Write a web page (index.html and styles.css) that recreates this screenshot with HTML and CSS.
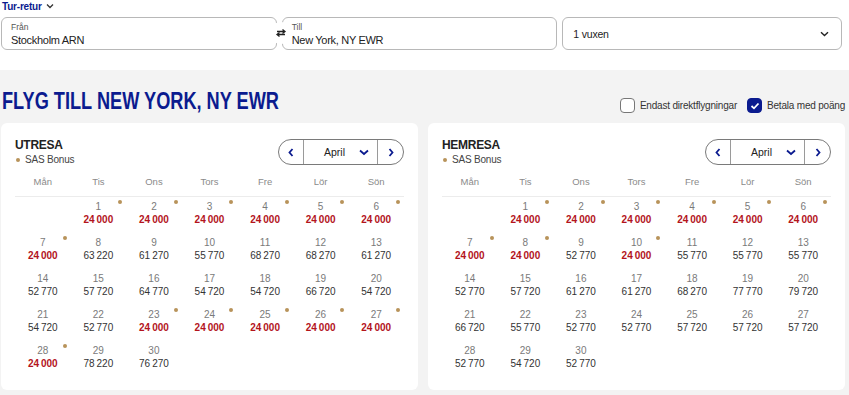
FILE: index.html
```html
<!DOCTYPE html>
<html lang="sv">
<head>
    <meta charset="UTF-8">
    <meta name="viewport" content="width=device-width, initial-scale=1.0">
    <title>Flyg till New York</title>
    <link rel="stylesheet" href="styles.css">
</head>
<body>
    <header class="search">
        <div class="trip-type">
            Tur-retur
            <svg width="8" height="6" viewBox="0 0 8 6"><polyline points="1,1.5 4,4.5 7,1.5" fill="none" stroke="#333" stroke-width="1.3"/></svg>
        </div>
        <div class="search-row">
            <div class="field">
                <span class="field-label">Från</span>
                <span class="field-value">Stockholm ARN</span>
            </div>
            <div class="swap">
                <svg width="12" height="10" viewBox="0 0 12 10">
                    <path d="M2 3.5h8M7.5 1.5l2.5 2-2.5 2" fill="none" stroke="#222" stroke-width="1.3"/>
                    <path d="M10 6.5H2M4.5 4.5L2 6.5l2.5 2" fill="none" stroke="#222" stroke-width="1.3"/>
                </svg>
            </div>
            <div class="field">
                <span class="field-label">Till</span>
                <span class="field-value">New York, NY EWR</span>
            </div>
            <div class="field field-pax">
                <span>1 vuxen</span>
                <svg width="9" height="6" viewBox="0 0 9 6"><polyline points="1,1.2 4.5,4.5 8,1.2" fill="none" stroke="#222" stroke-width="1.4"/></svg>
            </div>
        </div>
    </header>

    <main class="results">
        <div class="results-head">
            <h1>FLYG TILL NEW YORK, NY EWR</h1>
            <div class="filters">
                <label class="check"><span class="box"></span>Endast direktflygningar</label>
                <label class="check"><span class="box checked"><svg width="10" height="8" viewBox="0 0 10 8"><polyline points="1.5,4 4,6.3 8.5,1.5" fill="none" stroke="#fff" stroke-width="1.8"/></svg></span>Betala med poäng</label>
            </div>
        </div>

        <div class="calendars">
            <section class="cal">
                <div class="cal-head">
                    <div>
                        <h2>UTRESA</h2>
                        <div class="legend"><span class="dot"></span>SAS Bonus</div>
                    </div>
                    <div class="month-nav">
                        <span class="nav-btn"><svg width="6" height="9" viewBox="0 0 6 9"><polyline points="4.5,1 1.5,4.5 4.5,8" fill="none" stroke="#0b1b8f" stroke-width="1.8"/></svg></span>
                        <span class="nav-month">April <svg width="10" height="7" viewBox="0 0 10 7"><polyline points="1,1.5 5,5 9,1.5" fill="none" stroke="#0b1b8f" stroke-width="1.8"/></svg></span>
                        <span class="nav-btn"><svg width="6" height="9" viewBox="0 0 6 9"><polyline points="1.5,1 4.5,4.5 1.5,8" fill="none" stroke="#0b1b8f" stroke-width="1.8"/></svg></span>
                    </div>
                </div>
                <div class="weekdays">
                    <span>Mån</span><span>Tis</span><span>Ons</span><span>Tors</span><span>Fre</span><span>Lör</span><span>Sön</span>
                </div>
                <div class="days">
                    <div class="day"></div>
                    <div class="day bonus"><span class="num">1</span><span class="price">24&#8239;000</span></div>
                    <div class="day bonus"><span class="num">2</span><span class="price">24&#8239;000</span></div>
                    <div class="day bonus"><span class="num">3</span><span class="price">24&#8239;000</span></div>
                    <div class="day bonus"><span class="num">4</span><span class="price">24&#8239;000</span></div>
                    <div class="day bonus"><span class="num">5</span><span class="price">24&#8239;000</span></div>
                    <div class="day bonus"><span class="num">6</span><span class="price">24&#8239;000</span></div>

                    <div class="day bonus"><span class="num">7</span><span class="price">24&#8239;000</span></div>
                    <div class="day"><span class="num">8</span><span class="price">63&#8239;220</span></div>
                    <div class="day"><span class="num">9</span><span class="price">61&#8239;270</span></div>
                    <div class="day"><span class="num">10</span><span class="price">55&#8239;770</span></div>
                    <div class="day"><span class="num">11</span><span class="price">68&#8239;270</span></div>
                    <div class="day"><span class="num">12</span><span class="price">68&#8239;270</span></div>
                    <div class="day"><span class="num">13</span><span class="price">61&#8239;270</span></div>

                    <div class="day"><span class="num">14</span><span class="price">52&#8239;770</span></div>
                    <div class="day"><span class="num">15</span><span class="price">57&#8239;720</span></div>
                    <div class="day"><span class="num">16</span><span class="price">64&#8239;770</span></div>
                    <div class="day"><span class="num">17</span><span class="price">54&#8239;720</span></div>
                    <div class="day"><span class="num">18</span><span class="price">54&#8239;720</span></div>
                    <div class="day"><span class="num">19</span><span class="price">66&#8239;720</span></div>
                    <div class="day"><span class="num">20</span><span class="price">54&#8239;720</span></div>

                    <div class="day"><span class="num">21</span><span class="price">54&#8239;720</span></div>
                    <div class="day"><span class="num">22</span><span class="price">52&#8239;770</span></div>
                    <div class="day bonus"><span class="num">23</span><span class="price">24&#8239;000</span></div>
                    <div class="day bonus"><span class="num">24</span><span class="price">24&#8239;000</span></div>
                    <div class="day bonus"><span class="num">25</span><span class="price">24&#8239;000</span></div>
                    <div class="day bonus"><span class="num">26</span><span class="price">24&#8239;000</span></div>
                    <div class="day bonus"><span class="num">27</span><span class="price">24&#8239;000</span></div>

                    <div class="day bonus"><span class="num">28</span><span class="price">24&#8239;000</span></div>
                    <div class="day"><span class="num">29</span><span class="price">78&#8239;220</span></div>
                    <div class="day"><span class="num">30</span><span class="price">76&#8239;270</span></div>
                </div>
            </section>

            <section class="cal">
                <div class="cal-head">
                    <div>
                        <h2>HEMRESA</h2>
                        <div class="legend"><span class="dot"></span>SAS Bonus</div>
                    </div>
                    <div class="month-nav">
                        <span class="nav-btn"><svg width="6" height="9" viewBox="0 0 6 9"><polyline points="4.5,1 1.5,4.5 4.5,8" fill="none" stroke="#0b1b8f" stroke-width="1.8"/></svg></span>
                        <span class="nav-month">April <svg width="10" height="7" viewBox="0 0 10 7"><polyline points="1,1.5 5,5 9,1.5" fill="none" stroke="#0b1b8f" stroke-width="1.8"/></svg></span>
                        <span class="nav-btn"><svg width="6" height="9" viewBox="0 0 6 9"><polyline points="1.5,1 4.5,4.5 1.5,8" fill="none" stroke="#0b1b8f" stroke-width="1.8"/></svg></span>
                    </div>
                </div>
                <div class="weekdays">
                    <span>Mån</span><span>Tis</span><span>Ons</span><span>Tors</span><span>Fre</span><span>Lör</span><span>Sön</span>
                </div>
                <div class="days">
                    <div class="day"></div>
                    <div class="day bonus"><span class="num">1</span><span class="price">24&#8239;000</span></div>
                    <div class="day bonus"><span class="num">2</span><span class="price">24&#8239;000</span></div>
                    <div class="day bonus"><span class="num">3</span><span class="price">24&#8239;000</span></div>
                    <div class="day bonus"><span class="num">4</span><span class="price">24&#8239;000</span></div>
                    <div class="day bonus"><span class="num">5</span><span class="price">24&#8239;000</span></div>
                    <div class="day bonus"><span class="num">6</span><span class="price">24&#8239;000</span></div>

                    <div class="day bonus"><span class="num">7</span><span class="price">24&#8239;000</span></div>
                    <div class="day bonus"><span class="num">8</span><span class="price">24&#8239;000</span></div>
                    <div class="day"><span class="num">9</span><span class="price">52&#8239;770</span></div>
                    <div class="day bonus"><span class="num">10</span><span class="price">24&#8239;000</span></div>
                    <div class="day"><span class="num">11</span><span class="price">55&#8239;770</span></div>
                    <div class="day"><span class="num">12</span><span class="price">55&#8239;770</span></div>
                    <div class="day"><span class="num">13</span><span class="price">55&#8239;770</span></div>

                    <div class="day"><span class="num">14</span><span class="price">52&#8239;770</span></div>
                    <div class="day"><span class="num">15</span><span class="price">57&#8239;720</span></div>
                    <div class="day"><span class="num">16</span><span class="price">61&#8239;270</span></div>
                    <div class="day"><span class="num">17</span><span class="price">61&#8239;270</span></div>
                    <div class="day"><span class="num">18</span><span class="price">68&#8239;270</span></div>
                    <div class="day"><span class="num">19</span><span class="price">77&#8239;770</span></div>
                    <div class="day"><span class="num">20</span><span class="price">79&#8239;720</span></div>

                    <div class="day"><span class="num">21</span><span class="price">66&#8239;720</span></div>
                    <div class="day"><span class="num">22</span><span class="price">55&#8239;770</span></div>
                    <div class="day"><span class="num">23</span><span class="price">52&#8239;770</span></div>
                    <div class="day"><span class="num">24</span><span class="price">52&#8239;770</span></div>
                    <div class="day"><span class="num">25</span><span class="price">57&#8239;720</span></div>
                    <div class="day"><span class="num">26</span><span class="price">57&#8239;720</span></div>
                    <div class="day"><span class="num">27</span><span class="price">57&#8239;720</span></div>

                    <div class="day"><span class="num">28</span><span class="price">52&#8239;770</span></div>
                    <div class="day"><span class="num">29</span><span class="price">54&#8239;720</span></div>
                    <div class="day"><span class="num">30</span><span class="price">52&#8239;770</span></div>
                </div>
            </section>
        </div>
    </main>
</body>
</html>
```

FILE: styles.css
```css
* {
    box-sizing: border-box;
    margin: 0;
    padding: 0;
}

body {
    font-family: "Liberation Sans", Arial, sans-serif;
    color: #333;
    background-color: #f3f3f3;
    height: 395px;
    overflow: hidden;
}

/* search bar */
.search {
    background-color: #fff;
    height: 70px;
    padding: 0 7px 0 1px;
}

.trip-type {
    display: flex;
    align-items: center;
    gap: 4px;
    height: 12px;
    padding-left: 1px;
    font-size: 10px;
    font-weight: bold;
    letter-spacing: -0.2px;
    color: #0b1b8f;
}

.search-row {
    position: relative;
    display: flex;
    gap: 5px;
    margin-top: 5px;
}

.field {
    flex: 1;
    height: 33px;
    border: 1px solid #b8b8b8;
    border-radius: 6px;
    padding: 4px 9px 0;
    display: flex;
    flex-direction: column;
}

.field-label {
    font-size: 8.5px;
    line-height: 11px;
    color: #555;
}

.field-value {
    font-size: 11px;
    line-height: 14px;
    letter-spacing: -0.3px;
    color: #222;
}

.field-pax {
    flex-direction: row;
    align-items: center;
    justify-content: space-between;
    padding: 0 12px 0 10px;
    font-size: 10.5px;
    letter-spacing: -0.2px;
    color: #222;
}

.swap {
    position: absolute;
    left: 269px;
    top: 5px;
    width: 22px;
    height: 22px;
    border-radius: 50%;
    background-color: #fff;
    display: flex;
    align-items: center;
    justify-content: center;
}

/* results */
.results {
    padding: 0 4px 0 1px;
}

.results-head {
    height: 53px;
    display: flex;
    justify-content: space-between;
    align-items: flex-end;
    padding: 0 0 9px 1px;
}

h1 {
    font-size: 23px;
    line-height: 26px;
    font-weight: 900;
    color: #0b1b8f;
    transform: scaleX(0.79);
    transform-origin: left center;
    white-space: nowrap;
}

.filters {
    display: flex;
    gap: 10px;
    margin-bottom: 1px;
}

.check {
    display: flex;
    align-items: center;
    gap: 5px;
    font-size: 10px;
    letter-spacing: -0.2px;
    color: #333;
}

.box {
    width: 15px;
    height: 15px;
    border: 1px solid #777;
    border-radius: 4px;
    background-color: #fff;
    display: flex;
    align-items: center;
    justify-content: center;
}

.box.checked {
    background-color: #0b1b8f;
    border-color: #0b1b8f;
}

.calendars {
    display: grid;
    grid-template-columns: 1fr 1fr;
    gap: 10px;
}

.cal {
    background-color: #fff;
    border-radius: 6px;
    height: 267px;
    padding: 14px 14px 12px;
}

.cal-head {
    display: flex;
    justify-content: space-between;
    align-items: flex-start;
}

h2 {
    font-size: 12px;
    line-height: 16px;
    font-weight: bold;
    letter-spacing: -0.3px;
    color: #222;
}

.legend {
    display: flex;
    align-items: center;
    gap: 5px;
    font-size: 10px;
    line-height: 13px;
    letter-spacing: -0.2px;
    color: #444;
    padding-left: 1px;
}

.dot {
    width: 4px;
    height: 4px;
    border-radius: 50%;
    background-color: #b8935a;
}

.month-nav {
    display: flex;
    height: 26px;
    margin-top: 2px;
    border: 1px solid #7a7a7a;
    border-radius: 13px;
}

.nav-btn {
    width: 24px;
    display: flex;
    align-items: center;
    justify-content: center;
}

.nav-btn:last-child {
    width: 25px;
}

.nav-month {
    width: 75px;
    border-left: 1px solid #9a9a9a;
    border-right: 1px solid #9a9a9a;
    display: flex;
    align-items: center;
    justify-content: flex-end;
    gap: 14px;
    padding-right: 8px;
    font-size: 10.5px;
    color: #222;
}

.weekdays {
    display: grid;
    grid-template-columns: repeat(7, 1fr);
    margin-top: 8px;
    padding-bottom: 7px;
    border-bottom: 1px solid #ececec;
    font-size: 9.5px;
    line-height: 15px;
    color: #8a8a8a;
    text-align: center;
}

.days {
    display: grid;
    grid-template-columns: repeat(7, 1fr);
    grid-auto-rows: 36px;
    padding-top: 1px;
}

.day {
    position: relative;
    display: flex;
    flex-direction: column;
    align-items: center;
    padding-top: 3px;
}

.num {
    font-size: 10px;
    line-height: 12px;
    color: #7a7a7a;
}

.price {
    font-size: 10px;
    line-height: 13px;
    color: #333;
}

.bonus .price {
    color: #b3141c;
    font-weight: bold;
}

.bonus::after {
    content: "";
    position: absolute;
    top: 2px;
    right: 4px;
    width: 4px;
    height: 4px;
    border-radius: 50%;
    background-color: #b8935a;
}
```
